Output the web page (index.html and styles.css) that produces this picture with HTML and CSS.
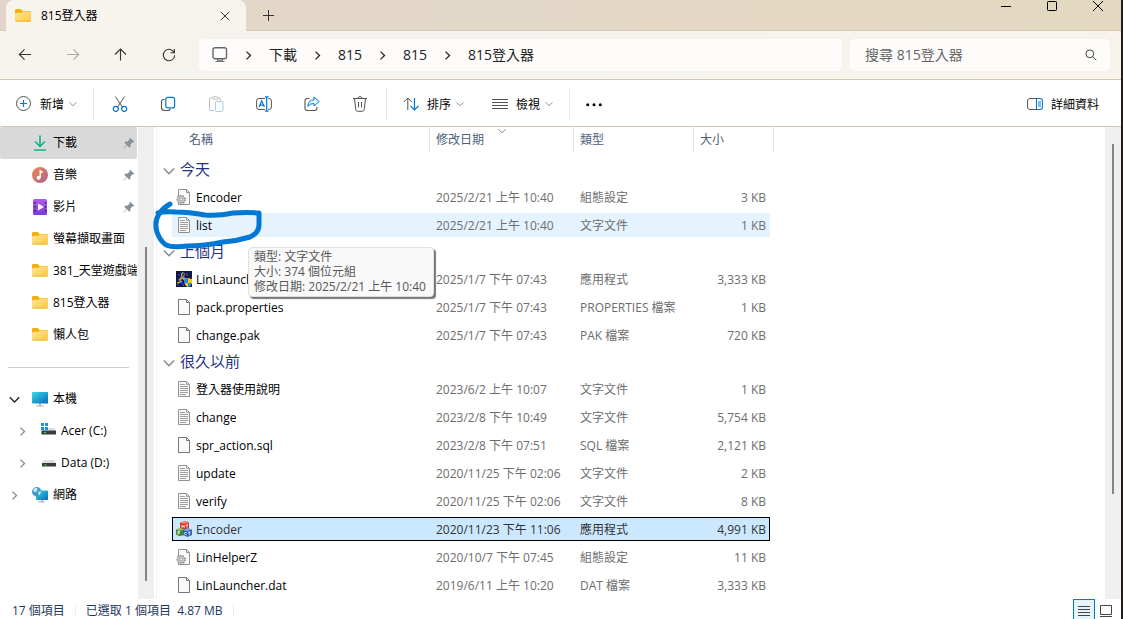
FILE: index.html
```html
<!DOCTYPE html>
<html lang="zh-Hant">
<head>
  <meta charset="UTF-8">
  <title>815登入器</title>
  <meta name="viewport" content="width=device-width, initial-scale=1.0">
  <link rel="stylesheet" href="styles.css">
</head>
<body>
  <!-- 共用圖示 -->
  <svg width="0" height="0" class="defs" aria-hidden="true">
    <defs>
      <linearGradient id="gFolder" x1="0" y1="0" x2="1" y2="1"><stop offset="0" stop-color="#ffe69a"/><stop offset="1" stop-color="#ffc83d"/></linearGradient>
      <linearGradient id="gMusic" x1="0" y1="0" x2="1" y2="1"><stop offset="0" stop-color="#f08a4b"/><stop offset="1" stop-color="#a8638f"/></linearGradient>
      <linearGradient id="gVideo" x1="0" y1="0" x2="0" y2="1"><stop offset="0" stop-color="#b35bea"/><stop offset="1" stop-color="#7a3ddc"/></linearGradient>
      <linearGradient id="gScreen" x1="0" y1="0" x2="1" y2="1"><stop offset="0" stop-color="#35dbe6"/><stop offset="1" stop-color="#0b69b8"/></linearGradient>
    </defs>
    <symbol id="folder" viewBox="0 0 16 16">
      <path d="M0 2.3Q0 1 1.3 1H5.6L7.6 3H14.7Q16 3 16 4.3V8H0z" fill="#f4b10b"/>
      <path d="M0 6Q0 5 1 5H6L7.8 3.6H15Q16 3.6 16 4.6V12.5Q16 13.5 15 13.5H1Q0 13.5 0 12.5z" fill="url(#gFolder)"/>
      <path d="M.5 13.2H15.5" stroke="#e6a30a" stroke-width=".7"/>
    </symbol>
    <symbol id="pin" viewBox="0 0 12 12">
      <path d="M7.2.7L11.3 4.8L10.3 5.6L9.5 5.3L7.5 7.5L7.3 10L6.4 10.7L3.9 8.3L.8 11.4L.5 11.1L3.5 7.9L1.3 5.6L2 4.8L4.5 4.6L6.7 2.5L6.3 1.6z" fill="#87939c"/>
    </symbol>
    <symbol id="down" viewBox="0 0 12 12"><path d="M.8 3.5L6 8.7L11.2 3.5" fill="none" stroke="currentColor" stroke-width="1.4"/></symbol>
    <symbol id="right" viewBox="0 0 12 12"><path d="M3.8 1.8L8.2 6L3.8 10.2" fill="none" stroke="currentColor" stroke-width="1.4"/></symbol>
    <symbol id="file" viewBox="0 0 16 16"><path d="M2.5.5H10.5L13.5 3.5V15.5H2.5z" fill="#fafafa" stroke="#777"/><path d="M10.5.5V3.5H13.5" fill="none" stroke="#777"/></symbol>
    <symbol id="text" viewBox="0 0 16 16"><path d="M2.5.5H10.5L13.5 3.5V15.5H2.5z" fill="#f7f7f7" stroke="#929292"/><path d="M10.5.5V3.5H13.5M4 3.5H9M4 5.5H12M4 7.5H12M4 9.5H12M4 11.5H12M4 13.5H10" fill="none" stroke="#a0a0a0"/></symbol>
    <symbol id="config" viewBox="0 0 16 16">
      <path d="M2.5.5H10.5L13.5 3.5V15.5H2.5z" fill="#fafafa" stroke="#929292"/><path d="M10.5.5V3.5H13.5" fill="none" stroke="#929292"/>
      <circle cx="5.2" cy="10.5" r="4" fill="#cfd4d8" stroke="#8b9196" stroke-width="1.6" stroke-dasharray="1.6 1.2"/><circle cx="5.2" cy="10.5" r="3.3" fill="#ccd1d5" stroke="#9aa0a5" stroke-width=".6"/><circle cx="5.2" cy="10.5" r="1.3" fill="#fff" stroke="#80868b" stroke-width=".7"/>
    </symbol>
    <symbol id="launcher" viewBox="0 0 16 16">
      <path d="M0 0H16V16H0z" fill="#11164c"/><path d="M5 2L7 1L9 3L8 6L11 8L9 10L6 8L4 10L2 9L5 6z" fill="#a99a80"/><path d="M1 14L5 11L8 15M2 3L4 5M10 2L12 5" stroke="#4b63b3" fill="none"/><path d="M6 3L8 2L7 7z" fill="#3a241d"/><path d="M1 12L6 10" stroke="#e3d36c"/>
      <path d="M12 7L16 8V12Q15 15 12 16Q9 15 8.5 12V8z" fill="#f9c80e"/><path d="M12 7V12H8.5V8z" fill="#1c8ce0"/><path d="M12 12H16Q15 15 12 16z" fill="#1c8ce0"/>
    </symbol>
    <symbol id="blocks" viewBox="0 0 16 16">
      <path d="M4 1.5L10 0L13 1.5V7.5L8 9L4 7.5z" fill="#d8352a"/><path d="M4 1.5L10 0L13 1.5L7.5 2.8z" fill="#f08a78"/>
      <path d="M0 8.5L4 7L8 8.5V14L3.5 15.2L0 13.5z" fill="#3f8a2c"/><path d="M0 8.5L4 7L8 8.5L3.5 9.7z" fill="#9cc67c"/>
      <path d="M7 9L12 7.3L16 8.6V14L11.5 16L7 14z" fill="#2d66b4"/><path d="M7 9L12 7.3L16 8.6L11 10z" fill="#82aee0"/>
      <path d="M6 4V6.8M6 5.4H8.2M8.2 4V6.8M9.8 3.8H12M11 3.8V6.5M2 10.5V13.5M2 10.5H4M2 12H4M10.5 11.5Q8.5 11 8.5 12.5Q8.5 14 10.5 13.7M12 11.2H14.5M13.3 11.2V14" stroke="#fff" stroke-width=".8" fill="none"/>
    </symbol>
  </svg>

  <header class="titlebar">
    <div class="tab">
      <svg class="ico"><use href="#folder"/></svg>
      <span class="tab-name">815登入器</span>
      <button class="icon-btn" aria-label="關閉索引標籤"><svg width="10" height="10" viewBox="0 0 10 10"><path d="M.7.7L9.3 9.3M9.3.7L.7 9.3" stroke="#333"/></svg></button>
    </div>
    <button class="icon-btn new-tab" aria-label="新索引標籤"><svg width="11" height="11" viewBox="0 0 11 11"><path d="M5.5 0V11M0 5.5H11" stroke="#333"/></svg></button>
    <div class="window-btns">
      <button aria-label="最小化"><svg width="10" height="10" viewBox="0 0 10 10"><path d="M0 5.5H10" stroke="#000"/></svg></button>
      <button aria-label="最大化"><svg width="10" height="10" viewBox="0 0 10 10"><rect x=".5" y=".5" width="9" height="9" rx=".8" fill="none" stroke="#000"/></svg></button>
      <button aria-label="關閉"><svg width="10" height="10" viewBox="0 0 10 10"><path d="M0 0L10 10M10 0L0 10" stroke="#000"/></svg></button>
    </div>
  </header>

  <div class="navbar">
    <button class="nav-btn" aria-label="上一頁"><svg width="14" height="14" viewBox="0 0 14 14"><path d="M13 6.5H1.5M6.5 1.3L1.3 6.5L6.5 11.7"/></svg></button>
    <button class="nav-btn" aria-label="下一頁" disabled><svg width="14" height="14" viewBox="0 0 14 14"><path d="M1 6.5H12.5M7.5 1.3L12.7 6.5L7.5 11.7"/></svg></button>
    <button class="nav-btn" aria-label="上移"><svg width="14" height="14" viewBox="0 0 14 14"><path d="M6.5 12.5V1.5M1 6.5L6.5 1L12 6.5"/></svg></button>
    <button class="nav-btn" aria-label="重新整理"><svg width="14" height="14" viewBox="0 0 14 14"><path d="M12.4 5.2A5.7 5.7 0 1 0 12.7 7.2M12.4 1V4.8H8.6"/></svg></button>
    <nav class="address">
      <svg width="16" height="16" viewBox="0 0 16 16"><rect x="1" y=".7" width="13.5" height="11" rx="2" fill="none" stroke="#666" stroke-width="1.4"/><path d="M3.5 14.5H12.5M5.5 12V14.5M10.5 12V14.5M5.5 13.3H10.5" stroke="#777"/></svg>
      <svg class="crumb-sep"><use href="#right"/></svg>
      <a href="#">下載</a>
      <svg class="crumb-sep"><use href="#right"/></svg>
      <a href="#">815</a>
      <svg class="crumb-sep"><use href="#right"/></svg>
      <a href="#">815</a>
      <svg class="crumb-sep"><use href="#right"/></svg>
      <a href="#">815登入器</a>
    </nav>
    <label class="search">
      <input type="text" placeholder="搜尋 815登入器" aria-label="搜尋 815登入器">
      <svg width="12" height="12" viewBox="0 0 12 12"><circle cx="4.8" cy="4.8" r="3.9" fill="none" stroke="#444"/><path d="M7.6 7.6L11.3 11.3" stroke="#444"/></svg>
    </label>
  </div>

  <div class="toolbar">
    <button class="tool with-text"><svg width="16" height="16" viewBox="0 0 16 16"><circle cx="7.5" cy="7.5" r="7" fill="none" stroke="#555"/><path d="M7.5 4V11M4 7.5H11" stroke="#0078d4" stroke-width="1.2"/></svg><span>新增</span><svg class="caret"><use href="#down"/></svg></button>
    <i class="sep"></i>
    <div class="tool-group">
      <button class="tool" aria-label="剪下"><svg width="16" height="16" viewBox="0 0 16 16"><path d="M3.4.5L10.6 11.4M12.6.5L5.4 11.4" stroke="#555"/><circle cx="3.8" cy="12.8" r="2.5" fill="none" stroke="#0078d4" stroke-width="1.2"/><circle cx="12.2" cy="12.8" r="2.5" fill="none" stroke="#0078d4" stroke-width="1.2"/></svg></button>
      <button class="tool" aria-label="複製"><svg width="16" height="16" viewBox="0 0 16 16"><path d="M4.5 3.5H3Q1.5 4 1.5 6V11.5Q1.5 14.5 4.5 14.5H8Q9.8 14.5 10.3 13" fill="none" stroke="#555" stroke-width="1.1"/><rect x="5.8" y="1.3" width="8.8" height="10.6" rx="2" fill="none" stroke="#0078d4" stroke-width="1.2"/></svg></button>
      <button class="tool" aria-label="貼上" disabled><svg width="16" height="16" viewBox="0 0 16 16"><path d="M6 14.5H2.5Q1.5 14.5 1.5 13.5V3Q1.5 2 2.5 2H4.5M10 2H11.5Q12.5 2 12.5 3V4.5" fill="none" stroke="#bdbdbd"/><rect x="4.5" y=".8" width="5.5" height="2.4" rx="1.2" fill="none" stroke="#bdbdbd"/><rect x="7.5" y="5.5" width="7.5" height="10" rx="1.2" fill="none" stroke="#a5cdec"/></svg></button>
      <button class="tool" aria-label="重新命名"><svg width="16" height="16" viewBox="0 0 16 16"><path d="M9 2.5H3Q.6 2.5 .6 5V11Q.6 13.5 3 13.5H9M12.3 2.5H13Q15.4 2.5 15.4 5V11Q15.4 13.5 13 13.5H12.3" fill="none" stroke="#555"/><path d="M3 11L5.7 5L8.4 11M4 9.2H7.5M10.7 1V15M9 .8H12.5M9 15.2H12.5" fill="none" stroke="#0078d4" stroke-width="1.2"/></svg></button>
      <button class="tool" aria-label="分享"><svg width="16" height="16" viewBox="0 0 16 16"><path d="M5.5 2.5H3.5Q1 2.5 1 5V12Q1 14.5 3.5 14.5H10.5Q13 14.5 13 12V11" fill="none" stroke="#555" stroke-width="1.1"/><path d="M10 1L15.2 5.5L10 10V7.5Q6 7.2 3.8 10.5Q4.2 4 10 3.7z" fill="#eaf5fd" stroke="#0078d4" stroke-linejoin="round"/></svg></button>
      <button class="tool" aria-label="刪除"><svg width="16" height="16" viewBox="0 0 16 16"><path d="M1 2.5H15M5.8 2.5Q6 .6 8 .6Q10 .6 10.2 2.5M2.5 2.8L3.8 13.6Q4 15.3 5.5 15.3H10.5Q12 15.3 12.2 13.6L13.5 2.8M6.5 6V11.5M9.5 6V11.5" fill="none" stroke="#555"/></svg></button>
    </div>
    <i class="sep"></i>
    <button class="tool with-text"><svg width="16" height="16" viewBox="0 0 16 16"><path d="M4.8 14V2M.8 6L4.8 2L8.8 6" fill="none" stroke="#555"/><path d="M11.5 2V14M7.5 10L11.5 14L15.5 10" fill="none" stroke="#0078d4" stroke-width="1.2"/></svg><span>排序</span><svg class="caret"><use href="#down"/></svg></button>
    <button class="tool with-text"><svg width="16" height="16" viewBox="0 0 16 16"><path d="M0 3.5H16M0 6.5H16M0 9.5H16M0 12.5H16" stroke="#555"/></svg><span>檢視</span><svg class="caret"><use href="#down"/></svg></button>
    <i class="sep"></i>
    <button class="tool" aria-label="查看更多"><svg width="16" height="16" viewBox="0 0 16 16"><circle cx="1.7" cy="8.7" r="1.5"/><circle cx="8" cy="8.7" r="1.5"/><circle cx="14.3" cy="8.7" r="1.5"/></svg></button>
    <button class="tool with-text details"><svg width="16" height="16" viewBox="0 0 16 16"><path d="M9.5 2.5H3Q.6 2.5 .6 5V11Q.6 13.5 3 13.5H9.5" fill="none" stroke="#555"/><path d="M9.5 2.5H13Q15.4 2.5 15.4 5V11Q15.4 13.5 13 13.5H9.5zM11 6H14M11 8H14M11 10H14" fill="none" stroke="#0078d4" stroke-width="1.1"/></svg><span>詳細資料</span></button>
  </div>

  <div class="main">
    <aside class="sidebar">
      <a href="#" class="item active"><svg class="ico" viewBox="0 0 16 16"><path d="M8 .5V11M3 6.5L8 11.3L13 6.5M2 15H14" fill="none" stroke="#17b28b" stroke-width="1.7"/></svg><span>下載</span><svg class="pin"><use href="#pin"/></svg></a>
      <a href="#" class="item"><svg class="ico" viewBox="0 0 16 16"><circle cx="8" cy="8" r="8" fill="url(#gMusic)"/><path d="M8.2 3V10.5M8.2 3.6Q9 5.2 11 5.2" fill="none" stroke="#fff" stroke-width="1.4"/><circle cx="6.6" cy="10.8" r="2" fill="#fff"/></svg><span>音樂</span><svg class="pin"><use href="#pin"/></svg></a>
      <a href="#" class="item"><svg class="ico" viewBox="0 0 16 16"><rect x="1" y="0" width="14" height="16" rx="1.5" fill="url(#gVideo)"/><path d="M6 4.5L12 8L6 11.5z" fill="#fff"/><path d="M3 3V14M13.5 3V14" stroke="#3f1a86" stroke-width="1.6" stroke-dasharray="1.6 2.4"/></svg><span>影片</span><svg class="pin"><use href="#pin"/></svg></a>
      <a href="#" class="item"><svg class="ico"><use href="#folder"/></svg><span>螢幕擷取畫面</span></a>
      <a href="#" class="item"><svg class="ico"><use href="#folder"/></svg><span>381_天堂遊戲端</span></a>
      <a href="#" class="item"><svg class="ico"><use href="#folder"/></svg><span>815登入器</span></a>
      <a href="#" class="item"><svg class="ico"><use href="#folder"/></svg><span>懶人包</span></a>
      <hr>
      <a href="#" class="item tree open"><svg class="arrow"><use href="#down"/></svg><svg class="ico" viewBox="0 0 16 16"><path d="M7 12H9V14.5H12V15.5H4V14.5H7z" fill="#a9b9c4"/><rect x="0" y="1" width="16" height="11.5" rx=".8" fill="url(#gScreen)"/></svg><span>本機</span></a>
      <a href="#" class="item tree child"><svg class="arrow"><use href="#right"/></svg><svg class="ico" viewBox="0 0 16 16"><path d="M1 0H4V3H1zM5 0H8V3H5zM1 4H4V7H1zM5 4H8V7H5z" fill="#1a94e0"/><path d="M8.5 5H14L16 7.5H1.5V7H8.5z" fill="#d9d9d9"/><path d="M1.5 7.5H16V11.5H1.5z" fill="#3b3b3b"/><path d="M4 9.5H6" stroke="#3be34a"/></svg><span>Acer (C:)</span></a>
      <a href="#" class="item tree child"><svg class="arrow"><use href="#right"/></svg><svg class="ico" viewBox="0 0 16 16"><path d="M4 5H14L16 8H2z" fill="#dedede"/><path d="M2 8H16V11.5H2z" fill="#3b3b3b"/><path d="M4.5 10H6.5" stroke="#3be34a"/></svg><span>Data (D:)</span></a>
      <a href="#" class="item tree"><svg class="arrow"><use href="#right"/></svg><svg class="ico" viewBox="0 0 16 16"><path d="M9 13H11V14.5H13V15.5H6V14.5H9z" fill="#a9b9c4"/><rect x="4" y="3.5" width="12" height="9.5" rx=".8" fill="url(#gScreen)"/><circle cx="4.7" cy="4.7" r="4.7" fill="#3d9ace"/><path d="M1 3Q3 0 5 1L5.5 3.5L3 5.5L2 4.5zM6 5L9 4Q9 7 7 8.5z" fill="#c7e8f5"/></svg><span>網路</span></a>
    </aside>
    <div class="scroll side-scroll"><div class="thumb"></div></div>

    <div class="content">
      <table class="files">
        <colgroup><col class="c-gutter"><col class="c-name"><col class="c-date"><col class="c-type"><col class="c-size"><col class="c-end"></colgroup>
        <thead>
          <tr><th></th><th class="name">名稱</th><th class="sorted">修改日期<svg class="sort"><use href="#down"/></svg></th><th>類型</th><th>大小</th><th></th></tr>
        </thead>
        <tbody>
          <tr class="group"><th colspan="6"><svg><use href="#down"/></svg>今天</th></tr>
          <tr><td></td><td><svg class="ico"><use href="#config"/></svg>Encoder</td><td>2025/2/21 上午 10:40</td><td>組態設定</td><td>3 KB</td></tr>
          <tr class="hover"><td></td><td><svg class="ico"><use href="#text"/></svg>list</td><td>2025/2/21 上午 10:40</td><td>文字文件</td><td>1 KB</td></tr>
        </tbody>
        <tbody>
          <tr class="group"><th colspan="6"><svg><use href="#down"/></svg>上個月</th></tr>
          <tr><td></td><td><svg class="ico"><use href="#launcher"/></svg>LinLauncher</td><td>2025/1/7 下午 07:43</td><td>應用程式</td><td>3,333 KB</td></tr>
          <tr><td></td><td><svg class="ico"><use href="#file"/></svg>pack.properties</td><td>2025/1/7 下午 07:43</td><td>PROPERTIES 檔案</td><td>1 KB</td></tr>
          <tr><td></td><td><svg class="ico"><use href="#file"/></svg>change.pak</td><td>2025/1/7 下午 07:43</td><td>PAK 檔案</td><td>720 KB</td></tr>
        </tbody>
        <tbody>
          <tr class="group"><th colspan="6"><svg><use href="#down"/></svg>很久以前</th></tr>
          <tr><td></td><td><svg class="ico"><use href="#text"/></svg>登入器使用說明</td><td>2023/6/2 上午 10:07</td><td>文字文件</td><td>1 KB</td></tr>
          <tr><td></td><td><svg class="ico"><use href="#text"/></svg>change</td><td>2023/2/8 下午 10:49</td><td>文字文件</td><td>5,754 KB</td></tr>
          <tr><td></td><td><svg class="ico"><use href="#file"/></svg>spr_action.sql</td><td>2023/2/8 下午 07:51</td><td>SQL 檔案</td><td>2,121 KB</td></tr>
          <tr><td></td><td><svg class="ico"><use href="#text"/></svg>update</td><td>2020/11/25 下午 02:06</td><td>文字文件</td><td>2 KB</td></tr>
          <tr><td></td><td><svg class="ico"><use href="#text"/></svg>verify</td><td>2020/11/25 下午 02:06</td><td>文字文件</td><td>8 KB</td></tr>
          <tr class="selected"><td></td><td><svg class="ico"><use href="#blocks"/></svg>Encoder</td><td>2020/11/23 下午 11:06</td><td>應用程式</td><td>4,991 KB</td></tr>
          <tr><td></td><td><svg class="ico"><use href="#config"/></svg>LinHelperZ</td><td>2020/10/7 下午 07:45</td><td>組態設定</td><td>11 KB</td></tr>
          <tr><td></td><td><svg class="ico"><use href="#file"/></svg>LinLauncher.dat</td><td>2019/6/11 上午 10:20</td><td>DAT 檔案</td><td>3,333 KB</td></tr>
        </tbody>
      </table>

      <div class="tooltip" role="tooltip">類型: 文字文件<br>大小: 374 個位元組<br>修改日期: 2025/2/21 上午 10:40</div>

      <!-- 手繪圈選 -->
      <svg class="mark" width="112" height="52" viewBox="0 0 112 52"><path d="M17 5Q10 9 6 15Q1 23 4 33Q7 42 13 46Q20 49 34 47Q52 47 70 43Q84 42 97 38Q106 34 106 26V14Q94 13 80 14Q66 17 52 16Q36 13 23 13Q12 12 5 14" fill="none" stroke="#0078d4" stroke-width="5" stroke-linecap="round" stroke-linejoin="round"/></svg>
    </div>
    <div class="scroll main-scroll"><div class="thumb"></div></div>
  </div>

  <footer class="status">
    <span>17 個項目</span>
    <span>已選取 1 個項目&nbsp; 4.87 MB</span>
    <div class="views">
      <button class="on" aria-label="詳細資料檢視"><svg width="12" height="12" viewBox="0 0 12 12"><path d="M0 1.5H12M0 4.5H12M0 7.5H12M0 10.5H12" stroke="#444"/></svg></button>
      <button aria-label="大圖示檢視"><svg width="12" height="12" viewBox="0 0 12 12"><path d="M.5.5H11.5V9.5H.5zM0 11.5H12" fill="none" stroke="#444"/></svg></button>
    </div>
  </footer>
</body>
</html>
```

FILE: styles.css
```css
* { box-sizing: border-box; }
body { margin:0; height:100vh; display:flex; flex-direction:column; overflow:hidden; background:#fff; border-right:2px solid #211d1a; font:12px/18px "Open Sans", "Noto Sans CJK TC", sans-serif; color:#000; }
button { border:0; padding:0; background:none; font:inherit; color:inherit; display:flex; align-items:center; justify-content:center; }
a { color:inherit; text-decoration:none; }
svg { flex:none; display:block; }
.defs { position:absolute; }
.ico { width:16px; height:16px; }

/* 標題列 */
.titlebar { display:flex; flex:none; height:31px; padding-left:6px; border-bottom:1px solid #d6c9b8; background:linear-gradient(90deg, #e3d6c8, #e2d8c8 45%, #e4d7c3 65%, #e2d9c0); }
.tab { display:flex; align-items:center; width:240px; height:31px; padding:0 16px 0 9px; border-radius:8px 8px 0 0; background:#f7f3ed; }
.tab-name { flex:1; padding-left:10px; }
.new-tab { width:44px; }
.window-btns { display:flex; margin-left:auto; }
.window-btns button { width:46px; height:12px; }

/* 導覽列 */
.navbar { display:flex; flex:none; align-items:center; height:49px; padding:0 11px 0 1px; background:linear-gradient(90deg, #f7f3ed, #f5f3ee 30%, #f7f3ec); border-bottom:1px solid #d3c8b8; }
.nav-btn { width:48px; height:32px; }
.nav-btn path { fill:none; stroke:#333; stroke-width:1.1; }
.nav-btn:disabled path { stroke:#aaa; }
.address { display:flex; align-items:center; flex:1; height:32px; margin-left:6px; padding-left:13px; border-radius:5px; background:#fdfcfa; font-size:14px; color:#222; }
.crumb-sep { width:41px; height:11px; }
.search { display:flex; align-items:center; width:260px; height:32px; margin-left:8px; padding:0 13px 0 15px; border-radius:5px; background:#fdfcfa; }
.search input { flex:1; min-width:0; border:0; padding:0; outline:0; background:none; font:inherit; font-size:14px; }
.search input::placeholder { color:#666; }

/* 工具列 */
.toolbar { display:flex; flex:none; align-items:center; height:47px; padding:2px 22px 0 0; border-bottom:1px solid #d3c8b0; }
.tool-group { display:flex; margin:0 2px; }
.tool { width:48px; height:32px; }
.with-text { width:auto; padding:0 16px; }
.with-text + .with-text { padding-left:12px; }
.with-text span { padding:1px 0 0 8px; }
.caret { width:8px; height:8px; margin-left:5px; color:#888; }
.sep { width:1px; height:32px; background:#e8e8e8; }
.with-text.details { margin-left:auto; padding:0; }

.main { display:flex; flex:1; min-height:0; }
.sidebar { width:138px; overflow:hidden; }
.item { display:flex; align-items:center; height:32px; width:137px; padding:0 2px 0 32px; white-space:nowrap; overflow:hidden; border-radius:2px; }
.item span { flex:1; padding-left:5px; }
.active { background:#d9d9d9; }
.pin { width:12px; height:12px; }
.sidebar hr { height:1px; margin:16px 9px 15px 8px; border:0; background:#cfcfcf; }
.tree { padding-left:9px; }
.arrow { width:11px; height:11px; margin-right:12px; color:#888; }
.open .arrow { color:#222; }
.child { padding-left:17px; }
.scroll { width:16px; background:#efefef; }
.thumb { width:2px; margin:0 auto; background:#858585; }
.side-scroll { padding-top:120px; }
.side-scroll .thumb { height:calc(100% - 18px); }
.main-scroll { padding-top:17px; }
.main-scroll .thumb { height:calc(100% - 105px); }

/* 檔案清單 */
.content { position:relative; flex:1; min-width:0; margin-left:2px; border-left:1px solid #f3f3f3; }
.files { table-layout:fixed; width:617px; margin-top:-4px; border-spacing:0 4px; }
.c-gutter { width:15px; }
.c-name { width:258px; }
.c-date { width:144px; }
.c-type { width:120px; }
.c-size { width:76px; }
.c-end { width:4px; }
.files th, .files td { padding:0 0 0 6px; font-weight:normal; text-align:left; white-space:nowrap; }
.files thead th { height:28px; padding-bottom:3px; color:#4c607a; background:linear-gradient(#e5e5e5, #e5e5e5) no-repeat right top/1px 25px; }
.files thead th:first-child, .files thead th:nth-child(5) { background:none; }
.files thead .name { padding-left:17px; }
.sorted { position:relative; }
.sort { position:absolute; top:0; left:50%; margin-left:-4px; width:8px; height:8px; color:#777; }
.files .group th { height:22px; padding:0 0 2px 6px; font-size:15px; line-height:20px; color:#1e3287; }
.group svg { display:inline-block; vertical-align:middle; width:12px; height:12px; margin-right:5px; color:#888; }
.files td { height:24px; padding-top:2px; color:#6d6d6d; }
.files td:nth-child(2) { padding-left:4px; color:#000; }
.files td:nth-child(5) { padding-right:4px; text-align:right; }
.files td .ico { display:inline-block; vertical-align:-3px; margin-right:4px; }
.files td:first-child { padding:0; }
.hover td:not(:first-child) { background:#e5f3ff; }
.selected td:not(:first-child) { background:#cce8ff; color:#333; box-shadow:inset 0 1px #000, inset 0 -1px #000; }
.files .selected td:nth-child(2) { box-shadow:inset 1px 1px #000, inset 0 -1px #000; }
.files .selected td:nth-child(5) { box-shadow:inset 0 1px #000, inset -1px -1px #000; }
.tooltip { position:absolute; left:91px; top:120px; padding:1px 7px 2px 5px; line-height:15px; color:#575757; background:#f9f9f9; border:1px solid #e0e0e0; border-radius:4px; box-shadow:2px 2px 1px #777; white-space:nowrap; }
.mark { position:absolute; left:-4px; top:72px; }

/* 狀態列 */
.status { display:flex; flex:none; align-items:center; height:20px; padding:2px 0 0 12px; color:#1e395b; overflow:hidden; }
.status span { padding-right:10px; margin-right:10px; border-right:1px solid #eee; line-height:13px; }
.views { display:flex; height:20px; margin-left:auto; padding-right:4px; align-self:flex-end; }
.views button { width:22px; height:24px; }
.views .on { border:1px solid #0078d4; background:#e5f3fb; }
```
